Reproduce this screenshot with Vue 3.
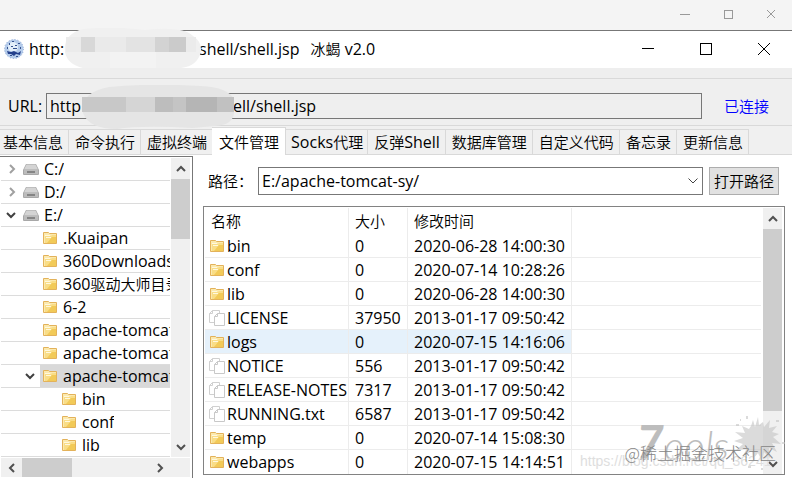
<template>
<div class="desktop">
  <div class="back-bar">
    <button aria-label="后台窗口最小化"><svg width="12" height="12"><path d="M1 6.5h10" /></svg></button>
    <button aria-label="后台窗口最大化"><svg width="12" height="12"><rect x="2.5" y="2.5" width="8" height="8" /></svg></button>
    <button aria-label="后台窗口关闭"><svg width="12" height="12"><path d="M2 2l8 8M10 2l-8 8" /></svg></button>
  </div>

  <div class="window">
    <header class="title-bar">
      <svg class="logo" width="20" height="20" viewBox="0 0 20 20">
        <circle cx="10" cy="10" r="9.5" fill="#b4cbea" />
        <circle cx="9" cy="8" r="5" fill="#e3effa" />
        <path d="M3 12l4 1 3-1 4 2 3-2-1 4-4-1-2 2-3-2-3 0z" fill="#24408c" />
        <path d="M7 7h2v1h-2zM11 6h2v1h-2zM9 9h4v1h-4zM5 4h1v2h-1zM14 4h2v1h-2zM3 8h1v2h-1zM16 8h1v2h-1zM8 2h2v1h-2zM6 16h2v1h-2zM12 17h2v1h-2z" fill="#35528f" />
        <circle cx="10" cy="10" r="9.5" fill="none" stroke="#8ba6d4" stroke-dasharray="1 2" />
      </svg>
      <div class="title">
        <span class="scheme">http:</span>
        <span>shell/shell.jsp</span>
        <span class="app-name"><span class="zh">冰蝎</span> v2.0</span>
        <svg class="blur-mask" width="140" height="42" viewBox="0 0 140 42">
          <path d="M20 1Q50 -2 82 2Q120 -2 130 8Q139 14 138 23Q135 38 118 40H20Q4 36 2 24Q0 6 20 1z" fill="#f0f0f0" />
          <path d="M3 9h130v15h-130z" fill="#ebebeb" />
          <rect x="18" y="9" width="14" height="15" fill="#d8d8d8" />
          <rect x="32" y="9" width="31" height="15" fill="#eaeaea" />
          <rect x="63" y="9" width="30" height="15" fill="#e3e3e3" />
          <rect x="92" y="9" width="14" height="15" fill="#d3d3d3" />
          <rect x="106" y="9" width="17" height="15" fill="#cbcbcb" />
          <rect x="47" y="24" width="46" height="16" fill="#f3f3f3" />
        </svg>
      </div>
      <div class="controls">
        <button aria-label="最小化"><svg width="14" height="14"><path d="M1 6.5h12" /></svg></button>
        <button aria-label="最大化"><svg width="14" height="14"><rect x="1.5" y="1.5" width="11" height="11" /></svg></button>
        <button aria-label="关闭"><svg width="14" height="14"><path d="M1 1l12 12M13 1l-12 12" /></svg></button>
      </div>
    </header>
    <div class="menu-bar"></div>

    <div class="url-bar">
      <label for="url">URL:</label>
      <div class="url-box">
        <input id="url" v-model="url" readonly>
        <span class="url-tail">ell/shell.jsp</span>
        <svg class="blur-mask" width="156" height="44" viewBox="0 0 156 44">
          <path d="M28 2Q70 -2 120 1Q146 2 153 14V28Q152 40 134 41L112 43Q60 40 36 44Q8 44 2 28Q-2 8 28 2z" fill="#e5e5e5" />
          <rect x="1" y="12" width="44" height="15" fill="#c8c8c8" />
          <rect x="45" y="12" width="29" height="15" fill="#d5d5d5" />
          <rect x="74" y="12" width="18" height="15" fill="#bdbdbd" />
          <rect x="92" y="12" width="13" height="15" fill="#c4c4c4" />
          <rect x="105" y="12" width="31" height="15" fill="#b5b5b5" />
          <rect x="136" y="12" width="17" height="15" fill="#c1c1c1" />
        </svg>
      </div>
      <span class="status zh">已连接</span>
    </div>

    <nav class="tabs">
      <button v-for="tab in tabs" :key="tab.zh" :class="{active: current === tab.zh}" @click="current = tab.zh">{{ tab.before }}<span class="zh">{{ tab.zh }}</span>{{ tab.after }}</button>
    </nav>

    <div class="content">
      <aside class="tree-panel">
        <ul class="tree">
          <li v-for="(node, index) in nodes" :key="index" :class="['level-' + node.level, {selected: selectedNode === index}]" @click="selectedNode = index">
            <span class="toggle">
              <svg v-if="node.state === 'open'" width="10" height="10"><path d="M1 3l4 4 4-4" stroke="#404040" stroke-width="2" /></svg>
              <svg v-if="node.state === 'closed'" width="10" height="10"><path d="M4 1l4 4-4 4" stroke="#a0a0a0" stroke-width="2" /></svg>
            </span>
            <span class="node">
              <svg v-if="node.level === 0" width="16" height="16" viewBox="0 0 16 16">
                <path d="M3 3h10l3 6v4q0 1-1 1H1q-1 0-1-1V9z" fill="#a8a8a8" />
                <path d="M3.500 3.500h9l2.500 5H1z" fill="#d4d4d4" />
                <path d="M1 9h14v4H1z" fill="#bcbcbc" />
                <path d="M4 10h8v2H4z" fill="#858585" />
              </svg>
              <svg v-else width="16" height="14" viewBox="0 0 16 14">
                <path d="M1.500 1.500h5l1 1h7v10h-13z" fill="#fbe9ae" stroke="#e3b25a" />
                <path d="M3 5h6l1-1h4v8H3z" fill="#f9dd86" />
                <path d="M10 6h4v6H5z" fill="#f2ca58" />
                <path d="M3 4.500h5M4 6.500h5" stroke="#fff8df" />
              </svg>
              <span class="name">{{ node.name }}<span class="zh">{{ node.zh }}</span></span>
            </span>
          </li>
        </ul>
        <div class="scroll-v">
          <button aria-label="向上滚动"><svg width="12" height="8"><path d="M2 6l4-4 4 4" /></svg></button>
          <div class="thumb tree-thumb"></div>
          <button class="last" aria-label="向下滚动"><svg width="12" height="8"><path d="M2 2l4 4 4-4" /></svg></button>
        </div>
        <div class="scroll-h">
          <button aria-label="向左滚动"><svg width="8" height="12"><path d="M6 2l-4 4 4 4" /></svg></button>
          <div class="thumb"></div>
          <button class="last" aria-label="向右滚动"><svg width="8" height="12"><path d="M2 2l4 4-4 4" /></svg></button>
        </div>
      </aside>

      <main class="files">
        <div class="path-bar">
          <label for="path" class="zh">路径：</label>
          <div class="path-box">
            <select id="path" v-model="path">
              <option>E:/apache-tomcat-sy/</option>
            </select>
            <svg width="10" height="6"><path d="M0.500 0.500l4.500 4.500 4.500-4.500" /></svg>
          </div>
          <button class="open zh">打开路径</button>
        </div>

        <div class="table-box">
          <table>
            <thead>
              <tr>
                <th class="col-name zh">名称</th>
                <th class="col-size zh">大小</th>
                <th class="col-time zh">修改时间</th>
                <th></th>
              </tr>
            </thead>
            <tbody>
              <tr v-for="file in files" :key="file.name" :class="{hover: file.name === 'logs'}">
                <td>
                  <div class="file">
                    <svg v-if="file.dir" width="16" height="14" viewBox="0 0 16 14">
                      <path d="M1.500 1.500h5l1 1h7v10h-13z" fill="#fbe9ae" stroke="#e3b25a" />
                      <path d="M3 5h6l1-1h4v8H3z" fill="#f9dd86" />
                      <path d="M10 6h4v6H5z" fill="#f2ca58" />
                      <path d="M3 4.500h5M4 6.500h5" stroke="#fff8df" />
                    </svg>
                    <svg v-else width="16" height="16" viewBox="0 0 16 16">
                      <path d="M3.500 0.500h7v12h-10v-9zM3.500 0.500v3h-3" fill="#fff" stroke="#d0d0d0" />
                      <path d="M8.500 3.500h7v12h-10v-9zM8.500 3.500v3h-3" fill="#fff" stroke="#c8c8c8" />
                    </svg>
                    {{ file.name }}
                  </div>
                </td>
                <td>{{ file.size }}</td>
                <td>{{ file.time }}</td>
                <td class="rest"></td>
              </tr>
            </tbody>
          </table>
          <div class="scroll-v">
            <button aria-label="向上滚动"><svg width="12" height="8"><path d="M2 6l4-4 4 4" /></svg></button>
            <div class="thumb file-thumb"></div>
            <button class="last" aria-label="向下滚动"><svg width="12" height="8"><path d="M2 2l4 4 4-4" /></svg></button>
          </div>
        </div>
      </main>
    </div>
  </div>

  <div class="watermark">
    <svg class="splash" width="64" height="60" viewBox="0 0 64 60">
      <path d="M27 14l2-6 2 7 3-10 1 8 4-3 1 5 6-7-1 8 8-2-5 6 7 2-6 3 8 7-9-1 5 9-8-4 1 10-6-6-2 9-4-8-5 6-1-8-9 5 4-8-12 3 8-7-9-3 9-3-8-6 10 1-3-7 7 3z" fill="#c4c4c4" />
      <path d="M22 4h2v3h-2zM52 8h3v2h-3zM12 12h3v2h-3zM7 46h2v2h-2zM24 54h3v2h-3zM37 56h2v2h-2zM58 30h3v2h-3zM16 7h1v2h-1z" fill="#c4c4c4" />
    </svg>
    <span class="brand"><b>7</b>ools</span>
    <span class="blog">https://blog.csdn.net/qq_36241</span>
    <span class="author">@稀土掘金技术社区</span>
  </div>
</div>
</template>

<script setup>
import { ref } from 'vue'

const url = ref('http')
const path = ref('E:/apache-tomcat-sy/')
const current = ref('文件管理')
const selectedNode = ref(9)

const tabs = [
  {zh: '基本信息'},
  {zh: '命令执行'},
  {zh: '虚拟终端'},
  {zh: '文件管理'},
  {before: 'Socks', zh: '代理'},
  {zh: '反弹', after: 'Shell'},
  {zh: '数据库管理'},
  {zh: '自定义代码'},
  {zh: '备忘录'},
  {zh: '更新信息'}
]

const nodes = ref([
  {level: 0, name: 'C:/', state: 'closed'},
  {level: 0, name: 'D:/', state: 'closed'},
  {level: 0, name: 'E:/', state: 'open'},
  {level: 1, name: '.Kuaipan'},
  {level: 1, name: '360Downloads'},
  {level: 1, name: '360', zh: '驱动大师目录'},
  {level: 1, name: '6-2'},
  {level: 1, name: 'apache-tomcat'},
  {level: 1, name: 'apache-tomcat'},
  {level: 1, name: 'apache-tomcat-sy', state: 'open'},
  {level: 2, name: 'bin'},
  {level: 2, name: 'conf'},
  {level: 2, name: 'lib'}
])

const files = ref([
  {name: 'bin', size: 0, time: '2020-06-28 14:00:30', dir: true},
  {name: 'conf', size: 0, time: '2020-07-14 10:28:26', dir: true},
  {name: 'lib', size: 0, time: '2020-06-28 14:00:30', dir: true},
  {name: 'LICENSE', size: 37950, time: '2013-01-17 09:50:42'},
  {name: 'logs', size: 0, time: '2020-07-15 14:16:06', dir: true},
  {name: 'NOTICE', size: 556, time: '2013-01-17 09:50:42'},
  {name: 'RELEASE-NOTES', size: 7317, time: '2013-01-17 09:50:42'},
  {name: 'RUNNING.txt', size: 6587, time: '2013-01-17 09:50:42'},
  {name: 'temp', size: 0, time: '2020-07-14 15:08:30', dir: true},
  {name: 'webapps', size: 0, time: '2020-07-15 14:14:51', dir: true}
])
</script>

<style>
body {
  margin: 0;
  background-color: #fff;
}
</style>

<style scoped>
* {
  box-sizing: border-box;
}

.desktop {
  position: relative;
  overflow: hidden;
  font: 16px/22px "Open Sans", "Noto Sans CJK SC", sans-serif;
  color: #000;
}

.zh {
  font-family: "Noto Sans CJK SC", sans-serif;
  font-size: 15px;
  font-weight: 350;
}

button {
  display: flex;
  align-items: center;
  justify-content: center;
  padding: 0;
  border: 0;
  background: none;
  font: inherit;
  color: inherit;
  white-space: nowrap;
}

svg {
  flex: none;
  fill: none;
}

.back-bar {
  display: flex;
  justify-content: flex-end;
  height: 30px;
  padding: 0 5px 3px 0;
  background-color: #f4f4f4;
}

.back-bar button {
  width: 32px;
  margin-left: 11px;
}

.back-bar path,
.back-bar rect {
  stroke: #999;
}

.window {
  border-top: 1px solid #777;
}

.title-bar {
  display: flex;
  align-items: center;
  height: 37px;
  padding: 0 0 2px 4px;
  background-color: #fff;
}

.title {
  position: relative;
  display: flex;
  flex: 1;
  margin-left: 5px;
  white-space: nowrap;
}

.scheme {
  width: 170px;
}

.app-name {
  margin-left: 11px;
}

.title .blur-mask {
  position: absolute;
  top: -10px;
  left: 34px;
}

.controls {
  display: flex;
}

.controls button {
  width: 58px;
  height: 37px;
}

.controls button:last-child {
  width: 56px;
  margin-left: 1px;
}

.controls path,
.controls rect {
  stroke: #000;
}

.menu-bar {
  height: 11px;
  background-color: #eee;
  border-bottom: 1px solid #d9d9d9;
}

.url-bar {
  display: flex;
  align-items: center;
  height: 47px;
  padding: 8px 23px 0 8px;
  background-color: #efefef;
  border-bottom: 1px solid #d9d9d9;
}

.url-bar label {
  width: 38px;
}

.url-box {
  position: relative;
  flex: 1;
  height: 26px;
}

.url-box input {
  display: block;
  width: 100%;
  height: 26px;
  padding: 0 3px;
  border: 1px solid #777;
  background-color: #efefef;
  font: inherit;
  outline: none;
}

.url-tail {
  position: absolute;
  top: 2px;
  left: 187px;
}

.url-box .blur-mask {
  position: absolute;
  top: -8px;
  left: 35px;
}

.status {
  margin-left: 22px;
  color: #0000ff;
}

.tabs {
  display: flex;
  align-items: flex-end;
  height: 29px;
  background: linear-gradient(#f0f0f0 28px, #d9d9d9 28px);
}

.tabs button {
  display: block;
  height: 26px;
  padding: 0 5px 0 6px;
  border: 1px solid #d9d9d9;
  border-left: 0;
  background-color: #f0f0f0;
  line-height: 22px;
}

.tabs button:first-child {
  padding-left: 3px;
}

.tabs button.active {
  height: 28px;
  margin-left: -1px;
  padding: 0 6px 0 7px;
  border-bottom: 0;
  background-color: #fff;
}

.tabs button.active + button {
  padding: 0 4px 0 5px;
}

.content {
  display: flex;
  background-color: #fff;
}

.tree-panel {
  display: grid;
  grid-template-columns: 1fr 19px;
  grid-template-rows: auto 19px;
  row-gap: 1px;
  flex: none;
  width: 193px;
  margin-top: 1px;
  padding: 1px 2px 1px 1px;
  border-top: 1px solid #777;
  border-right: 1px solid #777;
}

.tree {
  margin: 0 1px 0 0;
  padding: 0;
  list-style: none;
  overflow: hidden;
}

.tree li {
  display: flex;
  height: 23px;
  border-bottom: 1px solid #dcdcdc;
}

.tree li.level-1 {
  padding-left: 19px;
}

.tree li.level-2 {
  padding-left: 38px;
}

.toggle {
  display: flex;
  flex: none;
  align-items: center;
  justify-content: center;
  width: 20px;
}

.node {
  display: flex;
  flex: 1;
  align-items: center;
  min-width: 0;
  padding-left: 2px;
}

.name {
  margin-left: 5px;
  overflow: hidden;
  white-space: nowrap;
}

.selected .node {
  background-color: #d9d9d9;
}

.scroll-v {
  display: flex;
  flex-direction: column;
  width: 19px;
  background-color: #f0f0f0;
}

.scroll-v button {
  width: 19px;
  height: 21px;
}

.scroll-v path,
.scroll-h path {
  stroke: #505050;
  stroke-width: 2;
}

.scroll-v .last {
  margin-top: auto;
}

.thumb {
  background-color: #cdcdcd;
}

.tree-thumb {
  height: 60px;
}

.scroll-h {
  display: flex;
  grid-column: 1 / 3;
  padding-right: 20px;
  background-color: #f0f0f0;
}

.scroll-h button {
  width: 21px;
}

.scroll-h .thumb {
  width: 50px;
}

.scroll-h .last {
  margin-left: auto;
}

.files {
  flex: 1;
  min-width: 0;
  padding: 12px 7px 0 10px;
}

.path-bar {
  display: flex;
  align-items: center;
  height: 28px;
  padding: 0 6px 0 5px;
}

.path-bar label {
  width: 50px;
  white-space: nowrap;
}

.path-box {
  position: relative;
  flex: 1;
}

.path-box select {
  display: block;
  width: 100%;
  height: 28px;
  padding: 0 3px;
  border: 1px solid #777;
  border-radius: 0;
  background-color: #fff;
  appearance: none;
  font: inherit;
  color: inherit;
}

.path-box svg {
  position: absolute;
  top: 11px;
  right: 5px;
  stroke: #444;
  pointer-events: none;
}

.open {
  width: 70px;
  height: 28px;
  margin-left: 6px;
  border: 1px solid #adadad;
  background-color: #e1e1e1;
}

.table-box {
  display: flex;
  margin-top: 11px;
  padding: 1px 2px 0 1px;
  border: 1px solid #828282;
}

table {
  flex: 1;
  margin-right: 2px;
  border-collapse: separate;
  border-spacing: 0;
  table-layout: fixed;
}

th,
td {
  height: 24px;
  padding: 0 0 0 6px;
  border-right: 1px solid #ececec;
  text-align: left;
  white-space: nowrap;
}

th {
  height: 26px;
  font-weight: 350;
}

td {
  border-bottom: 1px solid #ececec;
}

th:last-child,
td:last-child {
  border-right: 0;
}

tr:last-child td {
  border-bottom: 0;
}

.col-name {
  width: 144px;
}

.col-size {
  width: 59px;
}

.col-time {
  width: 164px;
}

.file {
  display: flex;
  align-items: center;
  gap: 2px;
  margin-left: -2px;
}

.hover td {
  background-color: #e5f1fb;
}

.hover td.rest {
  background-color: #fff;
}

.file-thumb {
  height: 182px;
}

.watermark {
  position: absolute;
  right: 0;
  bottom: 0;
  width: 220px;
  height: 66px;
  pointer-events: none;
  white-space: nowrap;
}

.watermark > * {
  position: absolute;
}

.splash {
  top: 0;
  right: 4px;
  opacity: 0.6;
}

.brand {
  top: 8px;
  left: 64px;
  font: italic 40px/44px "Lato", sans-serif;
  font-weight: 300;
  color: #bdbdbd;
}

.brand b {
  font-size: 48px;
  font-weight: 700;
}

.blog {
  bottom: 8px;
  left: 8px;
  font: 14px/18px "Liberation Sans", sans-serif;
  color: #dedede;
}

.author {
  right: 16px;
  bottom: 14px;
  font: 17px/22px "Noto Sans CJK SC", sans-serif;
  font-weight: 300;
  color: #858585;
}
</style>
